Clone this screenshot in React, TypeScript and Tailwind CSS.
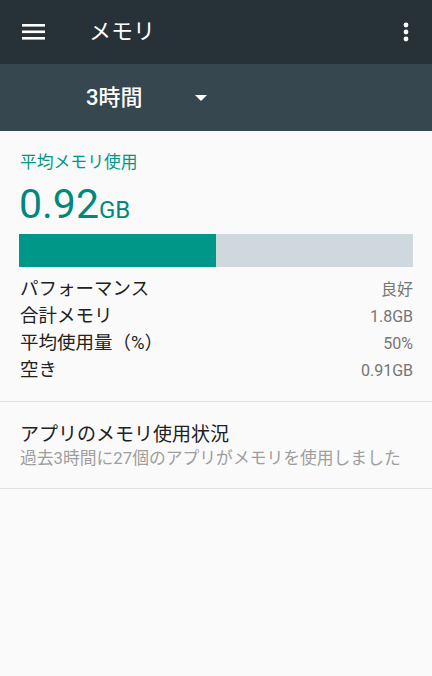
import React from "react";

const font = { fontFamily: 'Roboto, "Noto Sans CJK JP", sans-serif' };

function Row({ label, value }: { label: string; value: string }) {
  return (
    <div className="flex items-center justify-between h-[27px]">
      <span className="text-[18.5px] leading-[27px] text-[#212121]">{label}</span>
      <span className="text-[16px] leading-[27px] text-[#757575]">{value}</span>
    </div>
  );
}

export default function App() {
  return (
    <div className="w-[432px] h-[676px] bg-[#fafafa] flex flex-col overflow-hidden" style={font}>
      <div className="h-[64px] bg-[#263238] flex items-center shrink-0">
        <div className="w-[89px] flex items-center pl-[22px]">
          <svg width="23" height="16" viewBox="0 0 23 16">
            <rect x="0" y="0" width="23" height="2.6" fill="#fff" />
            <rect x="0" y="6.5" width="23" height="2.6" fill="#fff" />
            <rect x="0" y="13" width="23" height="2.6" fill="#fff" />
          </svg>
        </div>
        <span className="text-white text-[22px] leading-[30px] flex-1">メモリ</span>
        <div className="w-[52px] flex justify-center">
          <svg width="6" height="20" viewBox="0 0 6 20">
            <circle cx="3" cy="3" r="2.4" fill="#fff" />
            <circle cx="3" cy="10" r="2.4" fill="#fff" />
            <circle cx="3" cy="17" r="2.4" fill="#fff" />
          </svg>
        </div>
      </div>
      <div className="h-[67px] bg-[#37474f] flex items-center shrink-0 pl-[86px]">
        <span className="text-white text-[22px] leading-[30px] font-medium w-[109px]">3時間</span>
        <svg width="12" height="6" viewBox="0 0 12 6" className="mt-[1px]">
          <polygon points="0,0 12,0 6,6" fill="#fff" />
        </svg>
      </div>
      <div className="px-[19px] pt-[19px] pb-[17px] border-b border-[#e0e0e0]">
        <div className="text-[16.8px] leading-[24px] text-[#009688] pl-[1px]">平均メモリ使用</div>
        <div className="mt-[6px] h-[48px] flex items-baseline text-[#00897b]">
          <span className="text-[41px] leading-[48px]">0.92</span>
          <span className="text-[24px] leading-[48px]">GB</span>
        </div>
        <div className="mt-[6px] h-[33px] flex bg-[#cfd8dc]">
          <div className="w-1/2 bg-[#009688]" />
        </div>
        <div className="mt-[9px] pl-[1px]">
          <Row label="パフォーマンス" value="良好" />
          <Row label="合計メモリ" value="1.8GB" />
          <Row label="平均使用量（%）" value="50%" />
          <Row label="空き" value="0.91GB" />
        </div>
      </div>
      <div className="px-[20px] pt-[21px] pb-[19px] border-b border-[#e0e0e0]">
        <div className="text-[19px] leading-[24px] text-[#212121]">アプリのメモリ使用状況</div>
        <div className="text-[16.8px] leading-[22px] text-[#9e9e9e]">過去3時間に27個のアプリがメモリを使用しました</div>
      </div>
    </div>
  );
}
